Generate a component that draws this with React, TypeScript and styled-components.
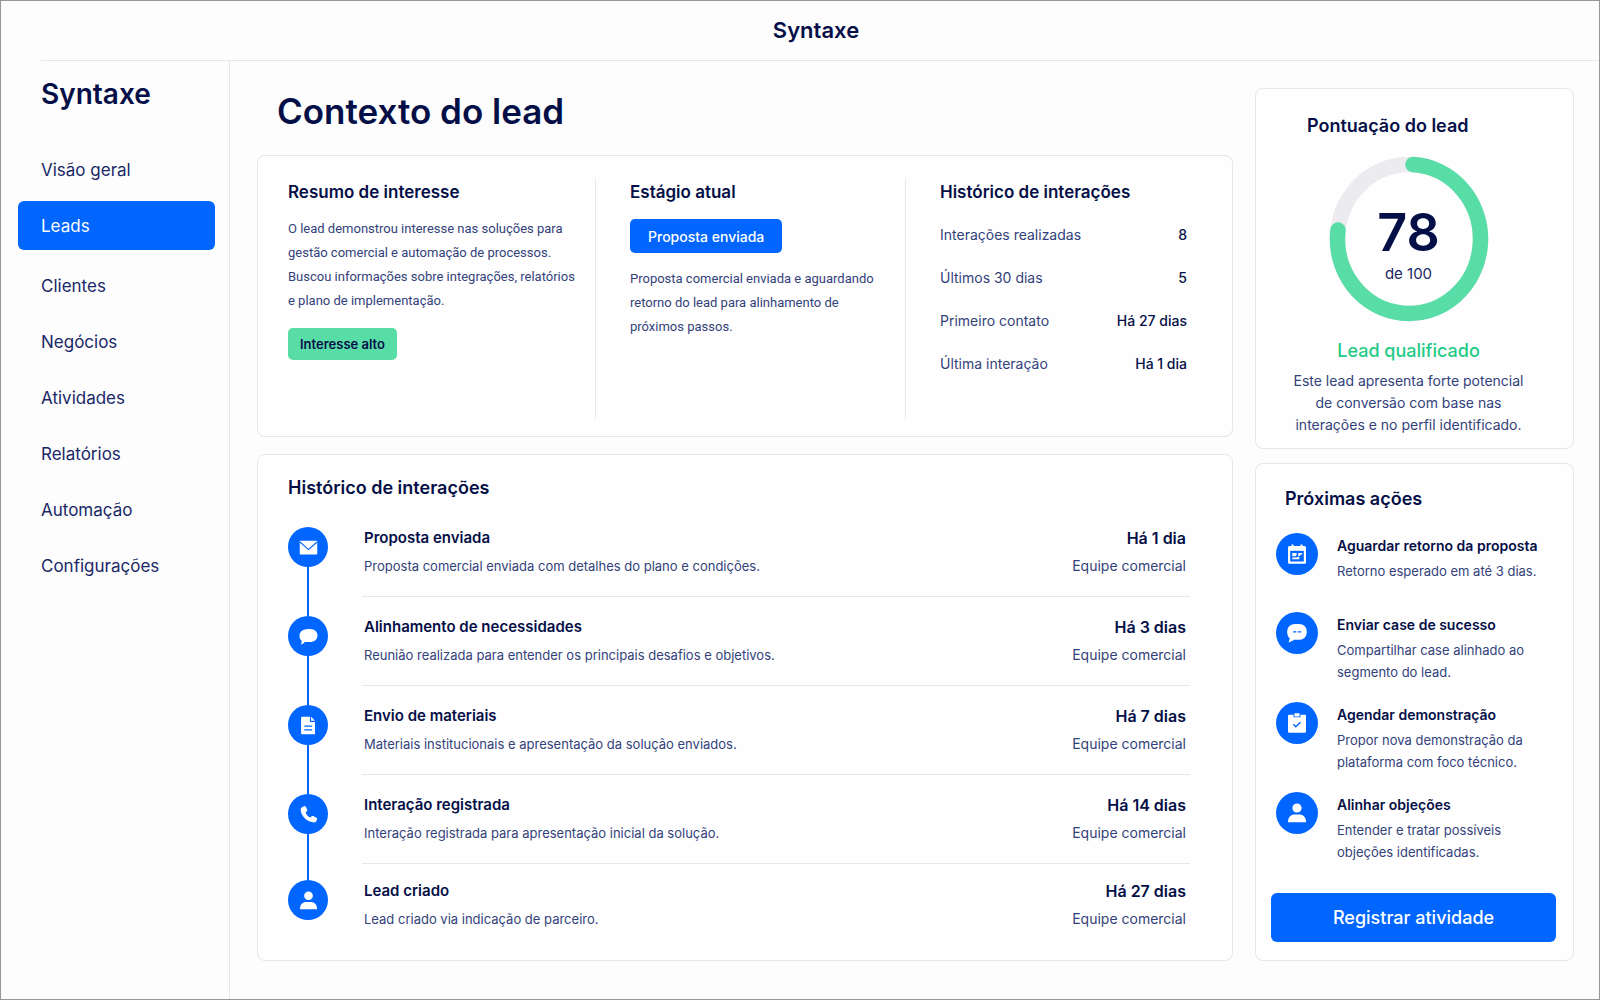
import React from "react";
import styled, { createGlobalStyle } from "styled-components";

const color = {
  ink: "#050f47",
  nav: "#1a2866",
  text: "#33427b",
  blue: "#0066ff",
  green: "#58dda7",
  greenText: "#22cb86",
  line: "#e5e6ee",
  track: "#ebebf0",
};

const GlobalStyle = createGlobalStyle`
  * { box-sizing: border-box; }
  body { margin: 0; background: #fdfdfe; }
  body, button { font-family: Inter, "Liberation Sans", sans-serif; }
  h1, h2, h3, p, ul, ol, dl, dd { margin: 0; padding: 0; }
  ul, ol { list-style: none; }
`;

const Page = styled.div`
  min-height: 100vh;
  display: flex;
  flex-direction: column;
  border: 1px solid #97979b;
  color: ${color.text};
`;

const Header = styled.header`
  height: 60px;
  margin-left: 40px;
  padding: 0 8px 2px 0;
  display: flex;
  align-items: center;
  justify-content: center;
  border-bottom: 1px solid ${color.line};
  color: ${color.ink};
  font-size: 22px;
  font-weight: 600;
`;

const Body = styled.div`
  flex: 1;
  display: flex;
`;

const Sidebar = styled.aside`
  width: 229px;
  flex: none;
  padding: 17px 14px 24px 17px;
  border-right: 1px solid ${color.line};
`;

const Brand = styled.div`
  padding-left: 23px;
  color: ${color.ink};
  font-size: 28px;
  line-height: 32px;
  font-weight: 600;
`;

const Nav = styled.nav`
  margin-top: 35px;
  display: flex;
  flex-direction: column;
  gap: 7px;
`;

const NavLink = styled.a<{ $active?: boolean }>`
  height: 49px;
  padding: 0 23px;
  margin-bottom: ${(p) => (p.$active ? "4px" : "0")};
  display: flex;
  align-items: center;
  border-radius: 6px;
  background: ${(p) => (p.$active ? color.blue : "transparent")};
  color: ${(p) => (p.$active ? "#ffffff" : color.nav)};
  font-size: 17px;
  text-decoration: none;
`;

const Content = styled.main`
  flex: 1;
  min-width: 0;
  padding: 27px 25px 38px 27px;
  display: grid;
  grid-template-columns: minmax(0, 1fr) 319px;
  gap: 22px;
`;

const Column = styled.div<{ $gap: number }>`
  display: flex;
  flex-direction: column;
  gap: ${(p) => p.$gap}px;
`;

const PageTitle = styled.h1`
  height: 50px;
  padding-left: 20px;
  color: ${color.ink};
  font-size: 35px;
  line-height: 46px;
  font-weight: 600;
`;

const Card = styled.section`
  border: 1px solid ${color.line};
  border-radius: 8px;
  background: #fefefe;
`;

const CardTitle = styled.h2<{ $small?: boolean }>`
  color: ${color.ink};
  font-size: ${(p) => (p.$small ? 17 : 18)}px;
  line-height: 26px;
  font-weight: 600;
`;

const OverviewCard = styled(Card)`
  padding: 23px 45px 17px 30px;
  display: grid;
  grid-template-columns: minmax(0, 308fr) minmax(0, 310fr) minmax(0, 281fr);
`;

const OverviewColumn = styled.div`
  min-height: 240px;
  & + & {
    padding-left: 34px;
  }
  &:not(:last-child) {
    border-right: 1px solid ${color.line};
  }
`;

const Paragraph = styled.p`
  margin-top: 12px;
  font-family: Roboto, sans-serif;
  font-size: 13px;
  line-height: 24px;
`;

const InterestTag = styled.span`
  display: inline-flex;
  align-items: center;
  height: 32px;
  margin-top: 15px;
  padding: 0 12px;
  border-radius: 5px;
  background: ${color.green};
  color: ${color.ink};
  font-size: 13px;
  font-weight: 600;
`;

const StageButton = styled.button`
  display: block;
  height: 34px;
  margin: 14px 0;
  padding: 0 18px;
  border: 0;
  border-radius: 5px;
  background: ${color.blue};
  color: #ffffff;
  font-size: 14px;
  font-weight: 500;
`;

const Facts = styled.dl`
  margin-top: 20px;
  display: flex;
  flex-direction: column;
  gap: 23px;
`;

const Fact = styled.div`
  display: flex;
  justify-content: space-between;
  font-size: 14px;
  line-height: 20px;
  dd {
    color: ${color.ink};
    font-weight: 500;
  }
`;

const HistoryCard = styled(Card)`
  flex: 1;
  padding: 20px 42px 19px 30px;
`;

const Timeline = styled.ol`
  margin-top: 26px;
`;

const Entry = styled.li`
  display: grid;
  grid-template-columns: 40px minmax(0, 1fr);
  column-gap: 34px;
  &:last-child {
    margin-top: -3px;
  }
`;

const Rail = styled.div`
  display: flex;
  flex-direction: column;
  align-items: center;
`;

const Connector = styled.span`
  flex: 1;
  width: 2px;
  background: ${color.blue};
`;

const Disc = styled.span<{ $size: number }>`
  width: ${(p) => p.$size}px;
  height: ${(p) => p.$size}px;
  flex: none;
  position: relative;
  display: flex;
  align-items: center;
  justify-content: center;
  border-radius: 50%;
  background: ${color.blue};
`;

const EntryBody = styled.div<{ $last?: boolean }>`
  min-height: ${(p) => (p.$last ? 0 : 70)}px;
  margin-bottom: ${(p) => (p.$last ? 0 : 19)}px;
  padding: 0 4px 0 2px;
  display: flex;
  justify-content: space-between;
  border-bottom: ${(p) => (p.$last ? "0" : `1px solid ${color.line}`)};
`;

const EntryTitle = styled.h3`
  color: ${color.ink};
  font-size: 15px;
  line-height: 22px;
  font-weight: 600;
`;

const EntryText = styled.p`
  margin-top: 7px;
  font-size: 13px;
  line-height: 20px;
`;

const EntryMeta = styled.div`
  text-align: right;
  font-size: 14px;
  line-height: 20px;
`;

const EntryTime = styled.p`
  margin-bottom: 7px;
  color: ${color.ink};
  font-size: 16px;
  line-height: 22px;
  font-weight: 600;
`;

const ScoreCard = styled(Card)`
  min-height: 361px;
  padding: 24px 20px 12px 8px;
  display: flex;
  flex-direction: column;
  align-items: center;
  text-align: center;
`;

const ScoreTitle = styled(CardTitle)`
  align-self: flex-start;
  padding-left: 43px;
`;

const Gauge = styled.div`
  margin-top: 17px;
  display: grid;
  place-items: center;
  > * {
    grid-area: 1 / 1;
  }
`;

const GaugeText = styled.div`
  padding-top: 11px;
`;

const GaugeValue = styled.p`
  color: ${color.ink};
  font-size: 52px;
  line-height: 56px;
  font-weight: 600;
`;

const GaugeLabel = styled.p`
  padding-top: 2px;
  color: ${color.nav};
  font-size: 15px;
  line-height: 22px;
`;

const Verdict = styled.p`
  margin-top: 17px;
  color: ${color.greenText};
  font-size: 18px;
  line-height: 24px;
  font-weight: 500;
`;

const ScoreText = styled.p`
  margin-top: 7px;
  font-size: 14px;
  line-height: 22px;
`;

const ActionsCard = styled(Card)`
  flex: 1;
  padding: 22px 17px 18px 15px;
  display: flex;
  flex-direction: column;
`;

const ActionsTitle = styled(CardTitle)`
  padding-left: 14px;
`;

const ActionList = styled.ul`
  padding: 21px 0 21px 5px;
  display: flex;
  flex-direction: column;
  gap: 19px;
`;

const Action = styled.li`
  min-height: 60px;
  display: flex;
  gap: 19px;
`;

const ActionTitle = styled.h3`
  margin: 2px 0 3px;
  color: ${color.ink};
  font-size: 14px;
  line-height: 22px;
  font-weight: 600;
`;

const ActionText = styled.p`
  font-size: 13px;
  line-height: 22px;
`;

const PrimaryButton = styled.button`
  height: 49px;
  margin-top: auto;
  border: 0;
  border-radius: 6px;
  background: ${color.blue};
  color: #ffffff;
  font-size: 18px;
  font-weight: 500;
`;

type IconName = "mail" | "chat" | "file" | "phone" | "user" | "calendar" | "dots" | "clipboard";

const shapes: Record<IconName, React.ReactNode> = {
  mail: (
    <>
      <rect x="0.8" y="2.8" width="18.4" height="14.6" rx="0.8" fill="#fff" />
      <path d="M1 4.2l9 8 9-8" fill="none" stroke={color.blue} strokeWidth="1.2" />
    </>
  ),
  chat: (
    <path
      d="M10 2.2h1.6c4.6 0 7.9 2.9 7.9 6.800s-3.300 6.900-7.900 6.900H9.200c-1.100 0-2.100-.2-3-.5-.9 1.300-2.400 2.600-4.400 3.400.9-1.500 1.100-2.800.9-4.300C1.200 13.100.5 11.200.5 9.200.5 5.100 4.400 2.200 10 2.200z"
      fill="#fff"
    />
  ),
  file: (
    <>
      <path d="M3.200.8h8.300v5.400h5.300V19.200H3.200a1 1 0 0 1-1-1V1.800a1 1 0 0 1 1-1z" fill="#fff" />
      <path d="M12.700.9l4.200 4.100h-4.200z" fill="#fff" />
      <path d="M5.600 10.700h8.200M5.600 14.700h8.200" stroke={color.blue} strokeWidth="1.300" />
    </>
  ),
  phone: (
    <path
      d="M3.600 2.100l1.900-.9c.6-.2 1.200 0 1.500.5L8.700 5c.3.6.1 1.200-.4 1.600L6.900 7.800c.8 2.300 2.700 4.300 5 5.400l1.500-1.300c.4-.4 1-.5 1.500-.2l3.500 1.700c.6.3.8.9.6 1.500l-.7 2c-.3.900-1.100 1.500-2.100 1.500C8.500 18.100 1.700 11.500 1.800 4.500c0-1 .7-1.900 1.800-2.400z"
      fill="#fff"
    />
  ),
  user: (
    <>
      <circle cx="10" cy="5" r="4.600" fill="#fff" />
      <path d="M1 19.200c0-5 2.900-7.600 6.800-7.600h4.400c3.900 0 6.800 2.600 6.800 7.600z" fill="#fff" />
    </>
  ),
  calendar: (
    <>
      <path
        d="M2.500 2h2V.4h2V2h7V.4h2V2h2a1.500 1.500 0 0 1 1.500 1.500v15a1.200 1.200 0 0 1-1.200 1.200H2.200A1.200 1.200 0 0 1 1 18.500v-15A1.500 1.500 0 0 1 2.500 2z"
        fill="#fff"
      />
      <rect x="3.200" y="6.800" width="13.600" height="10.700" fill={color.blue} />
      <path d="M5.300 9h3.900l1.200 1.500h-1.200v1.700H5.300zM11.300 9h3.900v1.400h-1.400l-1 1.500h-1.500zM5.300 13.600h4.600l1-.8h1.400v2.400H5.300z" fill="#fff" />
    </>
  ),
  dots: (
    <>
      <path
        d="M8.200 1h4c4.300 0 7.600 3 7.600 7.700 0 4.900-3.300 8.100-7.600 8.100H8.400c-1 0-1.600.1-2.300.6L1.600 19.400l1.200-3.800C1.100 14 .2 11.600.2 8.900.2 4 3.600 1 8.200 1z"
        fill="#fff"
      />
      <path d="M6 8.900h3.400M10.900 8.900h3.400" stroke={color.blue} strokeWidth="1.400" />
    </>
  ),
  clipboard: (
    <>
      <path
        d="M2.200 1.800h4.300v2.500h7V1.800h4.300c.7 0 1.200.5 1.200 1.200v15.600c0 .7-.5 1.200-1.200 1.200H2.200c-.7 0-1.200-.5-1.200-1.200V3c0-.7.5-1.200 1.200-1.200z"
        fill="#fff"
      />
      <rect x="7.400" y="0.200" width="5.200" height="3.200" rx="0.600" fill="#fff" />
      <path d="M6.300 11.300l2.500 2.500 4.600-4.500" fill="none" stroke={color.blue} strokeWidth="1.400" />
    </>
  ),
};

function Icon({ name, size }: { name: IconName; size: number }) {
  return (
    <svg width={size} height={size} viewBox="0 0 20 20" aria-hidden="true">
      {shapes[name]}
    </svg>
  );
}

const navItems = ["Visão geral", "Leads", "Clientes", "Negócios", "Atividades", "Relatórios", "Automação", "Configurações"];

const facts = [
  ["Interações realizadas", "8"],
  ["Últimos 30 dias", "5"],
  ["Primeiro contato", "Há 27 dias"],
  ["Última interação", "Há 1 dia"],
];

const history: { icon: IconName; title: string; text: string; time: string }[] = [
  { icon: "mail", title: "Proposta enviada", text: "Proposta comercial enviada com detalhes do plano e condições.", time: "Há 1 dia" },
  { icon: "chat", title: "Alinhamento de necessidades", text: "Reunião realizada para entender os principais desafios e objetivos.", time: "Há 3 dias" },
  { icon: "file", title: "Envio de materiais", text: "Materiais institucionais e apresentação da solução enviados.", time: "Há 7 dias" },
  { icon: "phone", title: "Interação registrada", text: "Interação registrada para apresentação inicial da solução.", time: "Há 14 dias" },
  { icon: "user", title: "Lead criado", text: "Lead criado via indicação de parceiro.", time: "Há 27 dias" },
];

const actions: { icon: IconName; title: string; lines: string[] }[] = [
  { icon: "calendar", title: "Aguardar retorno da proposta", lines: ["Retorno esperado em até 3 dias."] },
  { icon: "dots", title: "Enviar case de sucesso", lines: ["Compartilhar case alinhado ao", "segmento do lead."] },
  { icon: "clipboard", title: "Agendar demonstração", lines: ["Propor nova demonstração da", "plataforma com foco técnico."] },
  { icon: "user", title: "Alinhar objeções", lines: ["Entender e tratar possíveis", "objeções identificadas."] },
];

function Lines({ of }: { of: string[] }) {
  return (
    <>
      {of.map((line, i) => (
        <React.Fragment key={line}>
          {i > 0 && <br />}
          {line}
        </React.Fragment>
      ))}
    </>
  );
}

export default function App() {
  return (
    <>
      <GlobalStyle />
      <Page>
        <Header>Syntaxe</Header>
        <Body>
          <Sidebar>
            <Brand>Syntaxe</Brand>
            <Nav>
              {navItems.map((item) => (
                <NavLink key={item} href="#" $active={item === "Leads"}>
                  {item}
                </NavLink>
              ))}
            </Nav>
          </Sidebar>
          <Content>
            <Column $gap={17}>
              <PageTitle>Contexto do lead</PageTitle>
              <OverviewCard>
                <OverviewColumn>
                  <CardTitle $small>Resumo de interesse</CardTitle>
                  <Paragraph>
                    <Lines
                      of={[
                        "O lead demonstrou interesse nas soluções para",
                        "gestão comercial e automação de processos.",
                        "Buscou informações sobre integrações, relatórios",
                        "e plano de implementação.",
                      ]}
                    />
                  </Paragraph>
                  <InterestTag>Interesse alto</InterestTag>
                </OverviewColumn>
                <OverviewColumn>
                  <CardTitle $small>Estágio atual</CardTitle>
                  <StageButton type="button">Proposta enviada</StageButton>
                  <Paragraph>
                    <Lines
                      of={[
                        "Proposta comercial enviada e aguardando",
                        "retorno do lead para alinhamento de",
                        "próximos passos.",
                      ]}
                    />
                  </Paragraph>
                </OverviewColumn>
                <OverviewColumn>
                  <CardTitle $small>Histórico de interações</CardTitle>
                  <Facts>
                    {facts.map(([label, value]) => (
                      <Fact key={label}>
                        <dt>{label}</dt>
                        <dd>{value}</dd>
                      </Fact>
                    ))}
                  </Facts>
                </OverviewColumn>
              </OverviewCard>
              <HistoryCard>
                <CardTitle>Histórico de interações</CardTitle>
                <Timeline>
                  {history.map((entry, i) => {
                    const last = i === history.length - 1;
                    return (
                      <Entry key={entry.title}>
                        <Rail>
                          <Disc $size={40}>
                            <Icon name={entry.icon} size={19} />
                          </Disc>
                          {!last && <Connector />}
                        </Rail>
                        <EntryBody $last={last}>
                          <div>
                            <EntryTitle>{entry.title}</EntryTitle>
                            <EntryText>{entry.text}</EntryText>
                          </div>
                          <EntryMeta>
                            <EntryTime>{entry.time}</EntryTime>
                            Equipe comercial
                          </EntryMeta>
                        </EntryBody>
                      </Entry>
                    );
                  })}
                </Timeline>
              </HistoryCard>
            </Column>
            <Column $gap={14}>
              <ScoreCard>
                <ScoreTitle>Pontuação do lead</ScoreTitle>
                <Gauge>
                  <svg width="160" height="166" viewBox="0 0 160 166" role="img" aria-label="78 de 100">
                    <ellipse cx="80" cy="83" rx="71.500" ry="74.500" fill="none" stroke={color.track} strokeWidth="15.500" />
                    <path
                      d="M84 8.600A71.500 74.500 0 1 1 9 74"
                      fill="none"
                      stroke={color.green}
                      strokeWidth="15.500"
                      strokeLinecap="round"
                    />
                  </svg>
                  <GaugeText>
                    <GaugeValue>78</GaugeValue>
                    <GaugeLabel>de 100</GaugeLabel>
                  </GaugeText>
                </Gauge>
                <Verdict>Lead qualificado</Verdict>
                <ScoreText>
                  <Lines of={["Este lead apresenta forte potencial", "de conversão com base nas", "interações e no perfil identificado."]} />
                </ScoreText>
              </ScoreCard>
              <ActionsCard>
                <ActionsTitle>Próximas ações</ActionsTitle>
                <ActionList>
                  {actions.map((action) => (
                    <Action key={action.title}>
                      <Disc $size={42}>
                        <Icon name={action.icon} size={20} />
                      </Disc>
                      <div>
                        <ActionTitle>{action.title}</ActionTitle>
                        <ActionText>
                          <Lines of={action.lines} />
                        </ActionText>
                      </div>
                    </Action>
                  ))}
                </ActionList>
                <PrimaryButton type="button">Registrar atividade</PrimaryButton>
              </ActionsCard>
            </Column>
          </Content>
        </Body>
      </Page>
    </>
  );
}
